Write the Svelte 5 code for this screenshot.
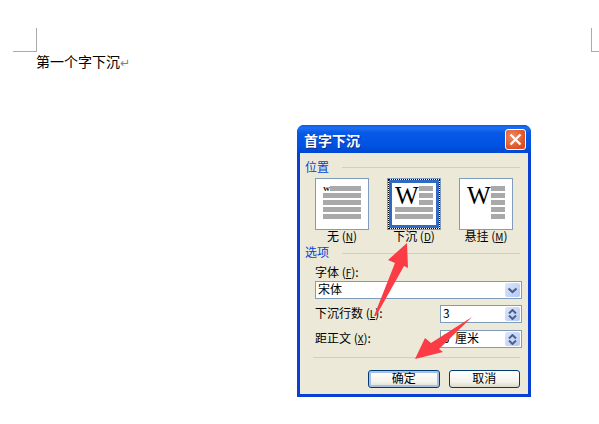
<script>
    const cards = [
        { name: '无', key: 'N', small: true, wx: 8, wide: [], bars: [] },
        { name: '下沉', key: 'D', selected: true, wx: 8, bars: [8, 15, 22], wide: [29, 36] },
        { name: '悬挂', key: 'M', wx: 8, bars: [8, 15, 22, 29, 36], wide: [] }
    ]
    const rows = [
        { label: '下沉行数', key: 'L', value: '3' },
        { label: '距正文', key: 'X', value: '0  厘米' }
    ]
</script>

<div class="page">
    <div class="marks">
        <div class="mark left"></div>
        <div class="mark right"></div>
    </div>
    <div class="doc">第一个字下沉<span class="para">↵</span></div>

    <div class="dialog">
        <div class="title">
            <span>首字下沉</span>
            <div class="close">
                <svg width="13" height="13" viewBox="0 0 13 13">
                    <path d="M1.5 1.5 L11.5 11.5 M11.5 1.5 L1.5 11.5" stroke="#fff" stroke-width="2.4" />
                </svg>
            </div>
        </div>
        <div class="body">
            <div class="head"><span>位置</span><i></i></div>
            <div class="cards">
                {#each cards as c}
                    <div class="choice">
                        <div class="card" class:selected={c.selected}>
                            <svg width="54" height="52" viewBox="0 0 54 52">
                                {#if c.small}
                                    <text x="8" y="13" class="tiny">W</text>
                                    <rect x="15" y="8" width="31" height="5" />
                                    {#each [15, 22, 29, 36] as y}
                                        <rect x="8" {y} width="38" height="5" />
                                    {/each}
                                {:else}
                                    <text x={c.wx} y="26" class="big">W</text>
                                    {#each c.bars as y}
                                        <rect x="32" {y} width="14" height="5" />
                                    {/each}
                                    {#each c.wide as y}
                                        <rect x="8" {y} width="38" height="5" />
                                    {/each}
                                {/if}
                            </svg>
                        </div>
                        <div class="cap">{c.name} (<u>{c.key}</u>)</div>
                    </div>
                {/each}
            </div>

            <div class="head second"><span>选项</span><i></i></div>
            <div class="options">
                <div class="lab">字体 (<u>F</u>):</div>
                <div class="select">
                    <span>宋体</span>
                    <div class="spin single">
                        <svg width="11" height="7" viewBox="0 0 11 7">
                            <path d="M1.5 1.5 L5.5 5 L9.5 1.5" fill="none" stroke="#4d6185" stroke-width="2.2" />
                        </svg>
                    </div>
                </div>
                {#each rows as r}
                    <div class="row">
                        <div class="lab">{r.label} (<u>{r.key}</u>):</div>
                        <div class="input">
                            <span>{r.value}</span>
                            <div class="spin">
                                <svg width="9" height="5" viewBox="0 0 9 5"><path d="M1 4.5 L4.5 1 L8 4.5" fill="none" stroke="#4d6185" stroke-width="2" /></svg>
                                <svg width="9" height="5" viewBox="0 0 9 5"><path d="M1 .5 L4.5 4 L8 .5" fill="none" stroke="#4d6185" stroke-width="2" /></svg>
                            </div>
                        </div>
                    </div>
                {/each}
            </div>
            <div class="rule"></div>
            <div class="buttons">
                <button class="default">确定</button>
                <button>取消</button>
            </div>
        </div>
    </div>

    <!-- the two red annotation arrows lie over the dialog -->
    <svg class="arrows" width="599" height="424" viewBox="0 0 599 424">
        <polygon points="407,243 388,260 395,263 374,316 376,316 404,266 408,268" />
        <polygon points="415,359 425,338 431,343 472,317 439,349 443,352" />
    </svg>
</div>

<style>
    :global(body) {
        margin: 0;
        background: #fff;
    }
    .page {
        position: relative;
        width: 599px;
        height: 424px;
        overflow: hidden;
        padding-top: 28px;
        box-sizing: border-box;
        font-family: "Noto Sans CJK SC", "Liberation Sans", sans-serif;
        color: #000;
    }
    .marks {
        display: flex;
        justify-content: space-between;
        padding: 0 0 0 13px;
    }
    .mark {
        height: 23px;
        border-bottom: 1px solid #ababab;
        box-sizing: content-box;
    }
    .mark.left {
        width: 23px;
        border-right: 1px solid #ababab;
    }
    .mark.right {
        width: 7px;
        border-left: 1px solid #ababab;
    }
    .doc {
        margin: 3px 0 0 36px;
        height: 17px;
        font-size: 14px;
        line-height: 13px;
    }
    .para {
        color: #808080;
        font-size: 12px;
        font-family: "DejaVu Sans", sans-serif;
    }
    .dialog {
        margin: 53px 0 0 297px;
        width: 234px;
        height: 272px;
        box-sizing: border-box;
        display: flex;
        flex-direction: column;
        background: #0a3fd4;
        border-radius: 7px 7px 0 0;
        font-size: 12px;
    }
    .title {
        height: 28px;
        flex: none;
        box-sizing: border-box;
        display: flex;
        align-items: center;
        justify-content: space-between;
        padding: 0 5px 0 7px;
        border-radius: 7px 7px 0 0;
        background: linear-gradient(#0a5ae6 0, #1d6ff2 3px, #0658e6 8px, #0054e3 20px, #0047d0 28px);
        color: #fff;
        font-size: 14px;
        font-weight: 700;
        text-shadow: 1px 1px 0 #0a2f9c;
    }
    .title span {
        padding-top: 2px;
    }
    .close {
        width: 21px;
        height: 21px;
        box-sizing: border-box;
        display: flex;
        align-items: center;
        justify-content: center;
        border: 1px solid #fff;
        border-radius: 3px;
        background: radial-gradient(circle at 35% 35%, #ee8a62, #dc4e22 75%);
    }
    .body {
        flex: 1;
        margin: 0 3px 3px;
        background: #ece9d8;
        padding: 7px 8px 0 5px;
        display: flex;
        flex-direction: column;
    }
    .head {
        display: flex;
        align-items: center;
        height: 14px;
        line-height: 14px;
        color: #0046d5;
    }
    .head span {
        width: 37px;
        flex: none;
    }
    .head i {
        flex: 1;
        height: 1px;
        background: #d0d0bf;
    }
    .head.second {
        margin-top: 1px;
    }
    .head.second span {
        line-height: 12px;
        height: 14px;
    }
    .cards {
        display: flex;
        gap: 18px;
        margin: 4px 0 0 10px;
    }
    .choice {
        width: 54px;
    }
    .card {
        width: 54px;
        height: 52px;
        box-sizing: border-box;
        background: #fff;
        outline: 1px solid #7f9db9;
        outline-offset: -1px;
    }
    .card svg {
        display: block;
    }
    .card rect {
        fill: #a9a9a9;
    }
    .card.selected {
        position: relative;
    }
    .card.selected::before {
        content: "";
        position: absolute;
        inset: 1px;
        border: 1px dotted #000;
    }
    .card.selected::after {
        content: "";
        position: absolute;
        inset: 2px;
        border: 3px solid #316ac5;
    }
    .big {
        font: 25px "Liberation Serif", serif;
        fill: #000;
    }
    .tiny {
        font: 700 7px "Liberation Serif", serif;
        fill: #000;
    }
    .cap {
        height: 15px;
        line-height: 12px;
        text-align: center;
        white-space: nowrap;
    }
    u {
        font-size: 10px;
    }
    .options {
        margin: 6px 0 0 10px;
        display: flex;
        flex-direction: column;
    }
    .lab {
        height: 15px;
        line-height: 12px;
        white-space: nowrap;
    }
    .select {
        width: 207px;
        height: 18px;
        box-sizing: border-box;
        border: 1px solid #7f9db9;
        background: #fff;
        display: flex;
        align-items: stretch;
        justify-content: space-between;
        line-height: 13px;
        padding: 0 0 0 2px;
    }
    .spin {
        flex: none;
        box-sizing: border-box;
        display: flex;
        flex-direction: column;
        align-items: center;
        justify-content: center;
        gap: 1px;
        margin: 1px;
        width: 15px;
        border-radius: 2px;
        background: linear-gradient(135deg, #dce6fd, #b4c8f6);
    }
    .row {
        display: flex;
        align-items: center;
        justify-content: space-between;
        width: 207px;
        height: 18px;
        margin-top: 6px;
    }
    .row + .row {
        margin-top: 7px;
    }
    .input {
        width: 82px;
        height: 18px;
        box-sizing: border-box;
        border: 1px solid #7f9db9;
        background: #fff;
        display: flex;
        align-items: stretch;
        justify-content: space-between;
        line-height: 13px;
        padding-left: 2px;
        white-space: pre;
    }
    .rule {
        height: 1px;
        margin: 9px 0 0 8px;
        background: #d0d0bf;
    }
    .buttons {
        display: flex;
        gap: 9px;
        margin: 12px 0 0 63px;
    }
    button {
        width: 72px;
        height: 18px;
        box-sizing: border-box;
        padding: 0 0 3px;
        border: 1px solid #003c74;
        border-radius: 3px;
        background: linear-gradient(#fff, #f3f2ea 70%, #dcd8c8);
        font: 12px/13px "Noto Sans CJK SC", sans-serif;
        color: #000;
    }
    button.default {
        box-shadow: inset 0 0 0 2px #a9bfe8;
    }
    .arrows {
        position: absolute;
        left: 0;
        top: 0;
        fill: #fb3c46;
    }
</style>
